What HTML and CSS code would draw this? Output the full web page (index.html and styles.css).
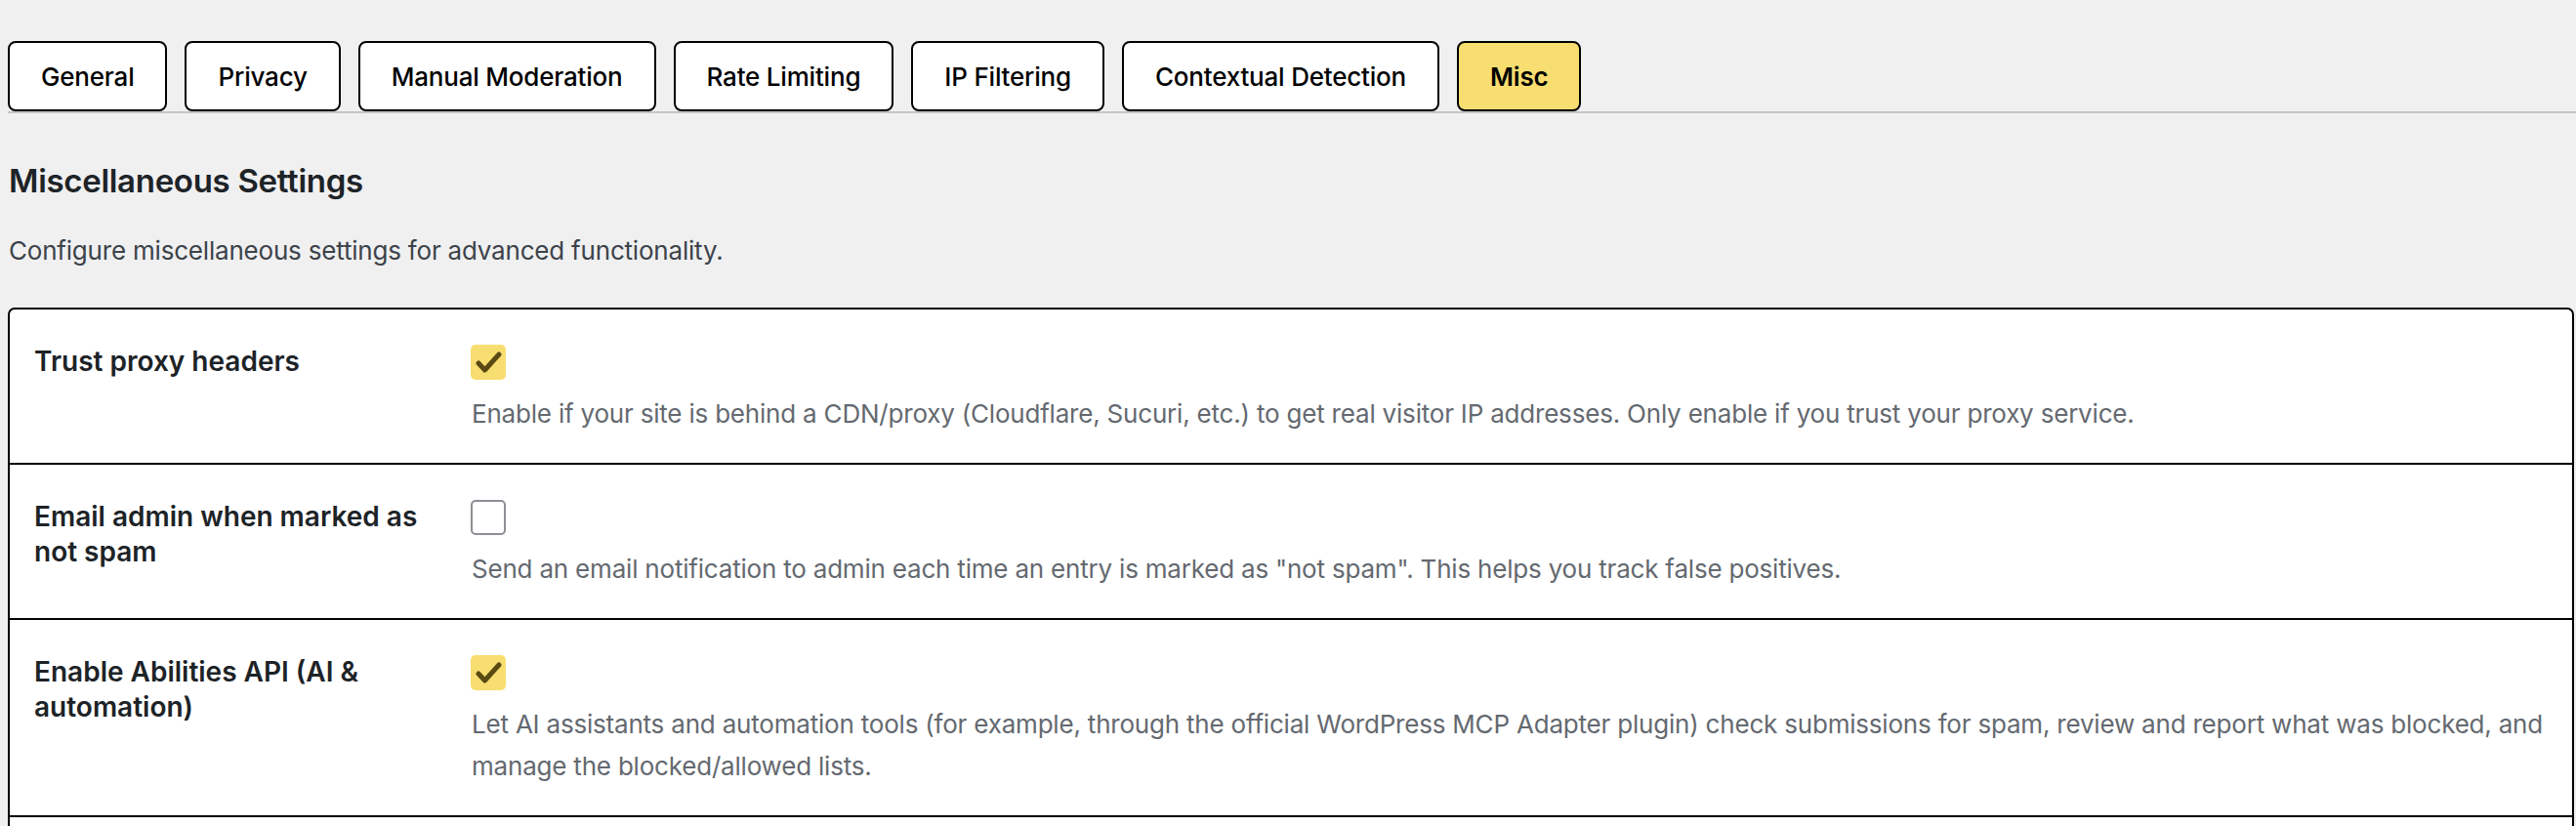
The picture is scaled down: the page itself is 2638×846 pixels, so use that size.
FILE: index.html
```html
<!DOCTYPE html>
<html lang="en">
<head>
<meta charset="utf-8">
<title>Miscellaneous Settings</title>
<link rel="stylesheet" href="styles.css">
</head>
<body>
<div class="wrap">
  <nav class="tabs">
    <a class="tab" href="#">General</a>
    <a class="tab" href="#">Privacy</a>
    <a class="tab" href="#">Manual Moderation</a>
    <a class="tab" href="#">Rate Limiting</a>
    <a class="tab" href="#">IP Filtering</a>
    <a class="tab" href="#">Contextual Detection</a>
    <a class="tab active" href="#">Misc</a>
  </nav>

  <h2 class="section-title">Miscellaneous Settings</h2>
  <p class="intro">Configure miscellaneous settings for advanced functionality.</p>

  <div class="settings">
    <div class="row">
      <div class="label">Trust proxy headers</div>
      <div class="field">
        <span class="checkbox checked"><svg viewBox="0 0 36 36" width="36" height="36"><path d="M8 19 L14.5 26 L29 10" fill="none" stroke="#5a4a12" stroke-width="5" stroke-linecap="round" stroke-linejoin="round"/></svg></span>
        <p class="desc">Enable if your site is behind a CDN/proxy (Cloudflare, Sucuri, etc.) to get real visitor IP addresses. Only enable if you trust your proxy service.</p>
      </div>
    </div>
    <div class="row">
      <div class="label">Email admin when marked as not spam</div>
      <div class="field">
        <span class="checkbox"></span>
        <p class="desc">Send an email notification to admin each time an entry is marked as "not spam". This helps you track false positives.</p>
      </div>
    </div>
    <div class="row">
      <div class="label">Enable Abilities API (AI &amp; automation)</div>
      <div class="field">
        <span class="checkbox checked"><svg viewBox="0 0 36 36" width="36" height="36"><path d="M8 19 L14.5 26 L29 10" fill="none" stroke="#5a4a12" stroke-width="5" stroke-linecap="round" stroke-linejoin="round"/></svg></span>
        <p class="desc">Let AI assistants and automation tools (for example, through the official WordPress MCP Adapter plugin) check submissions for spam, review and report what was blocked, and manage the blocked/allowed lists.</p>
      </div>
    </div>
    <div class="row row-empty"></div>
  </div>
</div>
</body>
</html>
```

FILE: styles.css
```css
html, body {
  margin: 0;
  padding: 0;
  background: #f0f0f1;
}

body {
  font-family: "Inter", "Liberation Sans", sans-serif;
  color: #3c434a;
  overflow: hidden;
}

.wrap {
  padding: 42px 0 0 8px;
}

.tabs {
  display: flex;
  gap: 18px;
  border-bottom: 2px solid #c3c4c7;
}

.tab {
  display: flex;
  align-items: center;
  height: 72px;
  box-sizing: border-box;
  padding: 0 32px;
  border: 2px solid #000;
  border-radius: 8px;
  background: #fff;
  color: #000;
  font-size: 26px;
  font-weight: 500;
  letter-spacing: -0.2px;
  text-decoration: none;
}

.tab.active {
  background: #f8de70;
  font-weight: 600;
}

.section-title {
  margin: 47px 0 0 1px;
  font-size: 33px;
  line-height: 44px;
  font-weight: 600;
  letter-spacing: -0.3px;
  color: #1d2327;
}

.intro {
  margin: 30px 0 0 1px;
  font-size: 26px;
  line-height: 39px;
  letter-spacing: -0.2px;
  color: #3c434a;
}

.settings {
  margin: 39px 2px 0 0;
  background: #fff;
  border: 2px solid #000;
  border-radius: 7px;
  overflow: hidden;
}

.row {
  display: grid;
  grid-template-columns: 472px 1fr;
}

.row + .row {
  border-top: 2px solid #000;
}

.row-empty {
  height: 120px;
}

.label {
  padding: 35px 27px 29px 25px;
  font-size: 28px;
  line-height: 36.4px;
  font-weight: 600;
  color: #1d2327;
}

.field {
  padding: 34px 20px 29px 0;
}

.checkbox {
  display: block;
  width: 36px;
  height: 36px;
  margin-top: 2px;
  box-sizing: border-box;
  border: 2px solid #8c8f94;
  border-radius: 5px;
  background: #fff;
}

.checkbox.checked {
  border: 0;
  background: #f8de70;
}

.checkbox svg {
  display: block;
}

.desc {
  margin: 13px 0 0 1px;
  font-size: 26px;
  line-height: 43px;
  letter-spacing: -0.2px;
  color: #646970;
}
```
